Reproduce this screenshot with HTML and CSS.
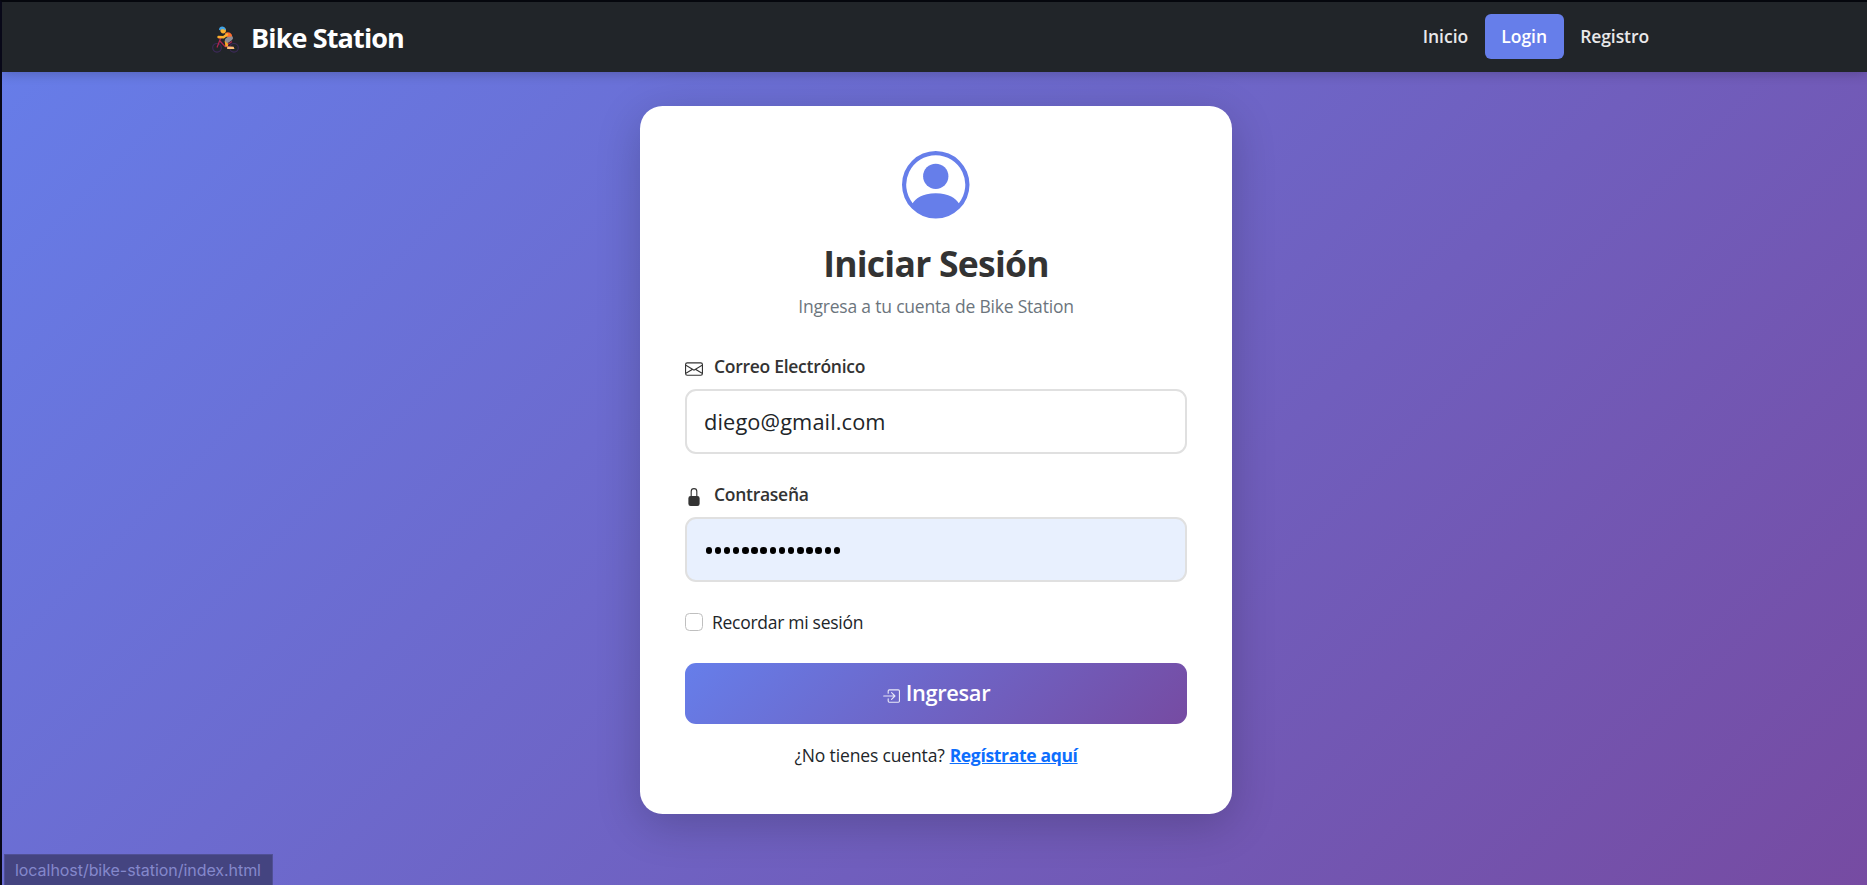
FILE: index.html
```html
<!DOCTYPE html>
<html lang="es">
<head>
<meta charset="utf-8">
<title>Bike Station - Login</title>
<link rel="stylesheet" href="styles.css">
</head>
<body>
<header class="navbar">
  <a class="brand">
    <svg class="brand-icon" viewBox="0 0 27 27">
      <g fill="none" stroke="#3d2a59" stroke-width="1.1"><circle cx="5" cy="21.8" r="4.3"/><circle cx="22" cy="21.8" r="4.3"/></g>
      <path d="M5 21.5 8.5 12.5M7.5 14.5 13 20.5 20 15.5M13 20.5 22 21.5M6.5 12.2h3" fill="none" stroke="#b3264f" stroke-width="1.2"/>
      <path d="M14 14.5 14.8 20.5" stroke="#f9a825" stroke-width="2.8"/>
      <path d="M15.5 14.3 18.5 12" stroke="#8c8c94" stroke-width="5" stroke-linecap="round"/>
      <path d="M13 7.2Q17 4.8 19.8 8.5L20 10.5 14.5 11Z" fill="#ff6d2e"/>
      <path d="M15 8.5 11.5 11.2 6.5 11" fill="none" stroke="#fbb02d" stroke-width="2.4" stroke-linecap="round" stroke-linejoin="round"/>
      <circle cx="11.2" cy="4.6" r="2.8" fill="#fbb02d"/>
      <path d="M7 4.3Q6.8.6 10.5.4 14 .8 13.6 4.5L11 2.9Z" fill="#42a5e8"/>
      <path d="M15.2 22.5V20.5L21.5 20.8 22.5 23H15Z" fill="#ffc27a"/>
    </svg>
    <span class="t-brand">Bike Station</span>
  </a>
  <nav class="nav">
    <a class="nav-link">Inicio</a>
    <a class="nav-link active">Login</a>
    <a class="nav-link t-registro">Registro</a>
  </nav>
</header>
<main class="page">
  <form class="card">
    <svg class="avatar" viewBox="0 0 16 16" fill="currentColor"><path d="M11 6a3 3 0 1 1-6 0 3 3 0 0 1 6 0"/><path fill-rule="evenodd" d="M0 8a8 8 0 1 1 16 0A8 8 0 0 1 0 8m8-7a7 7 0 0 0-5.468 11.37C3.242 11.226 4.805 10 8 10s4.757 1.225 5.468 2.37A7 7 0 0 0 8 1"/></svg>
    <h1 class="title">Iniciar Sesión</h1>
    <p class="subtitle">Ingresa a tu cuenta de Bike Station</p>
    <label class="label"><svg class="icon" viewBox="0 0 16 16" fill="currentColor"><path d="M0 4a2 2 0 0 1 2-2h12a2 2 0 0 1 2 2v8a2 2 0 0 1-2 2H2a2 2 0 0 1-2-2zm2-1a1 1 0 0 0-1 1v.217l7 4.2 7-4.2V4a1 1 0 0 0-1-1zm13 2.383-4.708 2.825L15 11.105zm-.034 6.876-5.64-3.471L8 9.583l-1.326-.795-5.64 3.47A1 1 0 0 0 2 13h12a1 1 0 0 0 .966-.741M1 11.105l4.708-2.897L1 5.383z"/></svg><span>Correo Electrónico</span></label>
    <div class="field"><span>diego@gmail.com</span></div>
    <label class="label label-next"><svg class="icon" viewBox="0 0 16 16" fill="currentColor"><path d="M8 1a2 2 0 0 1 2 2v4H6V3a2 2 0 0 1 2-2m3 6V3a3 3 0 0 0-6 0v4a2 2 0 0 0-2 2v5a2 2 0 0 0 2 2h6a2 2 0 0 0 2-2V9a2 2 0 0 0-2-2"/></svg><span>Contraseña</span></label>
    <div class="field autofill"><span class="dots"><i></i><i></i><i></i><i></i><i></i><i></i><i></i><i></i><i></i><i></i><i></i><i></i><i></i><i></i><i></i></span></div>
    <label class="remember"><span class="checkbox"></span><span>Recordar mi sesión</span></label>
    <div class="submit"><svg class="icon" viewBox="0 0 16 16" fill="currentColor"><path fill-rule="evenodd" d="M6 3.5a.5.5 0 0 1 .5-.5h8a.5.5 0 0 1 .5.5v9a.5.5 0 0 1-.5.5h-8a.5.5 0 0 1-.5-.5v-2a.5.5 0 0 0-1 0v2A1.5 1.5 0 0 0 6.5 14h8a1.5 1.5 0 0 0 1.5-1.5v-9A1.5 1.5 0 0 0 14.5 2h-8A1.5 1.5 0 0 0 5 3.5v2a.5.5 0 0 0 1 0z"/><path fill-rule="evenodd" d="M11.854 8.354a.5.5 0 0 0 0-.708l-3-3a.5.5 0 1 0-.708.708L10.293 7.5H1.5a.5.5 0 0 0 0 1h8.793l-2.147 2.146a.5.5 0 0 0 .708.708z"/></svg><span>Ingresar</span></div>
    <p class="register"><span class="ask">¿No tienes cuenta?</span><a class="link">Regístrate aquí</a></p>
  </form>
</main>
<div class="status">localhost/bike-station/index.html</div>
</body>
</html>
```
FILE: styles.css
```css
* { box-sizing: border-box; }
body {
  margin: 0;
  width: 1867px;
  height: 885px;
  overflow: hidden;
  border-top: 2px solid #05070d;
  border-left: 2px solid #080818;
  background: linear-gradient(135deg, #667eea 0%, #764ba2 100%);
  font: 17.5px/27px "Open Sans", "Noto Sans", sans-serif;
  color: #212529;
}
.navbar {
  height: 70px;
  padding: 0 201.5px 0 210px;
  display: flex;
  align-items: flex-start;
  justify-content: space-between;
  background: #212529;
  box-shadow: 0 2px 11px rgba(0, 0, 0, .2);
}
.brand { display: flex; gap: 12px; padding-top: 17px; color: #fff; font-size: 27px; font-weight: 700; line-height: 38px; letter-spacing: -.87px; }
.brand-icon { width: 27px; height: 27px; margin-top: 7px; }
.nav { display: flex; padding-top: 12px; font-weight: 600; }
.nav-link { height: 45px; padding: 9px 16.5px 0; line-height: 27px; border-radius: 6px; color: #e9e9ea; white-space: nowrap; }
.nav-link.active { background: #667eea; color: #fff; }
.t-registro { letter-spacing: -.08px; }
span, .link { white-space: nowrap; }
.page { display: flex; justify-content: center; padding: 34px 0 0 3px; }
.card {
  width: 592px;
  height: 708px;
  padding: 45px;
  border-radius: 22.5px;
  background: #fff;
  box-shadow: 0 11px 45px rgba(0, 0, 0, .2);
}
.avatar { display: block; width: 67.5px; height: 67.5px; margin: 0 auto 23px; color: #667eea; }
.title { margin: 0 0 8px; font-size: 35.5px; line-height: 43px; text-align: center; color: #333; letter-spacing: -.75px; }
.subtitle { margin: 0 0 33px; text-align: center; color: #6c757d; letter-spacing: -.2px; }
.label { display: flex; gap: 11px; margin-bottom: 9px; font-weight: 600; color: #333; letter-spacing: -.28px; }
.icon { width: 18px; height: 18px; margin-top: 7px; }
.label-next { margin-top: 27px; }
.field {
  height: 65px;
  padding: 0 17px;
  border: 2px solid #e0e0e0;
  border-radius: 11px;
  font-size: 21.8px;
  line-height: 62px;
  letter-spacing: .1px;
}
.autofill { display: flex; align-items: center; background: #e8f0fe; }
.dots { display: flex; gap: 2.67px; padding: 3px 0 0 1.5px; }
.dots i { width: 6.5px; height: 6.5px; border-radius: 50%; background: #000; }
.remember { display: flex; gap: 9px; margin-top: 27px; letter-spacing: -.28px; }
.checkbox { width: 18px; height: 18px; margin-top: 4px; border: 1px solid #bfbfbf; border-radius: 4.5px; }
.submit {
  display: flex;
  justify-content: center;
  gap: 6px;
  height: 61px;
  margin-top: 27px;
  border-radius: 11px;
  background: linear-gradient(135deg, #667eea 0%, #764ba2 100%);
  color: #fff;
  font-size: 21.8px;
  font-weight: 600;
  line-height: 59px;
  letter-spacing: -.35px;
}
.submit .icon { margin-top: 24px; opacity: .85; }
.register { display: flex; justify-content: center; gap: 5px; margin: 18px 0 0; }
.ask { letter-spacing: -.15px; }
.link { color: #0d6efd; font-weight: 700; text-decoration: underline; letter-spacing: -.33px; }
.status {
  position: absolute;
  left: 4px;
  bottom: 0;
  width: 269px;
  height: 31px;
  padding-left: 10px;
  border: 1px solid #505095;
  border-bottom: 0;
  background: #444480;
  color: #8488cc;
  font: 16px/30px Inter, sans-serif;
  letter-spacing: -.05px;
  white-space: nowrap;
}
```
